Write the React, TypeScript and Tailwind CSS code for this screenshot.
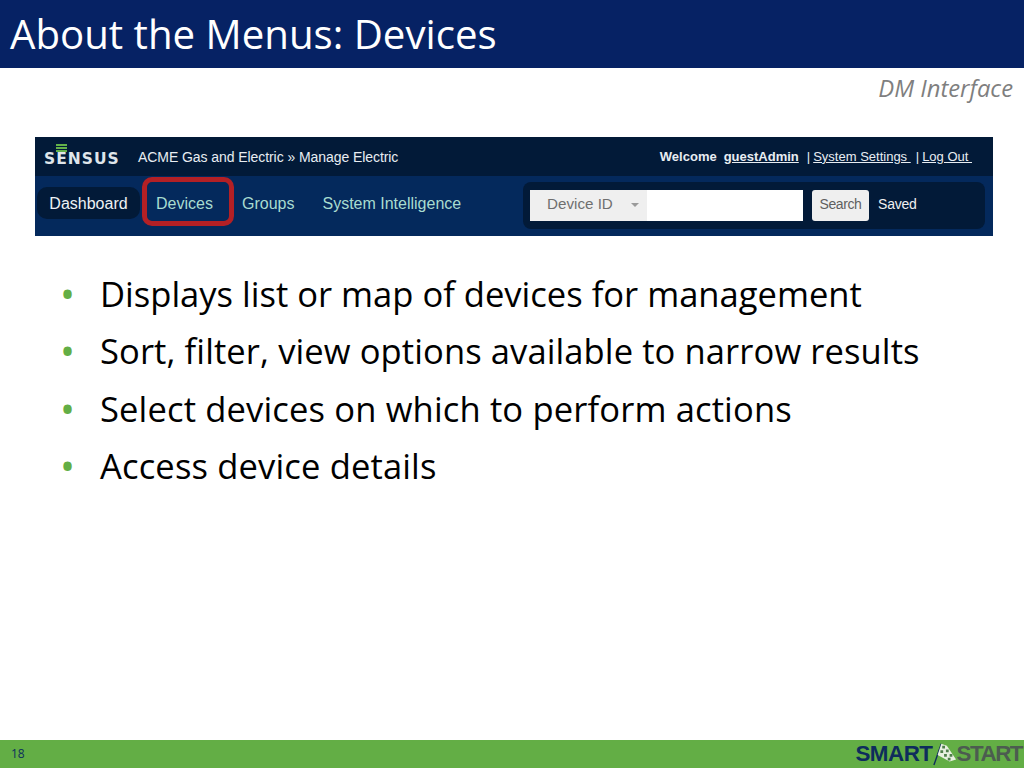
export default function App() {
  const bullets = [
    { text: "Displays list or map of devices for management", fit: "tracking-[0px]" },
    { text: "Sort, filter, view options available to narrow results", fit: "tracking-[0.09px]" },
    { text: "Select devices on which to perform actions", fit: "tracking-[0.14px]" },
    { text: "Access device details", fit: "tracking-[0.14px]" },
  ];
  return (
    <div className="w-[1024px] h-[768px] flex flex-col bg-white overflow-hidden font-['Open_Sans',sans-serif]">
      <header className="h-[68px] bg-[#062264] flex items-center pl-[10px] text-white text-[40.2px] leading-none">
        About the Menus: Devices
      </header>
      <main className="flex-1 flex flex-col">
        <div className="h-[69px] pt-[6px] pr-[11px] text-right italic text-[23.8px] leading-[28px] text-[#7f7f7f]">
          DM Interface
        </div>
        <section className="mx-[35px] w-[958px] h-[99px] flex flex-col font-['Liberation_Sans',sans-serif]">
          <div className="h-[39px] bg-[#021a38] flex items-center pl-[9px] pr-[21px] text-white">
            <div className="w-[74px] h-[26px] flex flex-col items-start">
              <div className="ml-[12px] w-[11px] flex flex-col gap-[1px]">
                <span className="h-[2px] bg-[#63b14a]" />
                <span className="h-[2px] bg-[#63b14a]" />
                <span className="h-[2px] bg-[#63b14a]" />
              </div>
              <span className="font-['DejaVu_Sans',sans-serif] font-bold text-[15.5px] leading-[15px] tracking-[1px] text-[#dfe5ea]">SENSUS</span>
            </div>
            <span className="ml-[20px] text-[14px] tracking-[-0.07px] text-[#e8edf2] relative top-[1px]">ACME Gas and Electric » Manage Electric</span>
            <div className="ml-auto flex items-center text-[13px] text-[#e8edf2]">
              <span className="font-bold">Welcome</span>
              <span className="ml-[7px] font-bold underline">guestAdmin</span>
              <span className="ml-[8px]">|</span>
              <span className="ml-[3px] underline whitespace-pre">System Settings </span>
              <span className="ml-[5px]">|</span>
              <span className="ml-[3px] underline whitespace-pre">Log Out </span>
            </div>
          </div>
          <div className="flex-1 bg-[#04295c] flex items-center pl-[2px] pr-[8px] pb-[6px] text-[16px]">
            <span className="w-[103px] h-[32px] pt-[2px] rounded-[10px] bg-[#021a38] text-[#eef2f5] flex items-center justify-center">Dashboard</span>
            <span className="ml-[2px] w-[92px] h-[49px] pt-[5px] rounded-[10px] border-[5px] border-[#b32025] text-[#a8dcd0] flex items-center pl-[9px] relative -top-[2px]">Devices</span>
            <span className="ml-[8px] text-[#a8dcd0] relative top-[1px]">Groups</span>
            <span className="ml-[28px] text-[#a8dcd0] relative top-[1px]">System Intelligence</span>
            <div className="ml-auto w-[462px] h-[47px] rounded-[8px] bg-[#021a38] flex items-center pl-[7px] mt-[4px]">
              <div className="w-[117px] h-[31px] pb-[1px] bg-[#efefef] text-[#6f6f6f] flex items-center pl-[17px] text-[15.2px]">
                Device ID
                <span className="ml-[18px] w-0 h-0 border-x-[4px] border-x-transparent border-t-[4px] border-t-[#9a9a9a]" />
              </div>
              <div className="w-[156px] h-[31px] bg-white" />
              <span className="ml-[9px] w-[57px] h-[31px] pb-[2px] rounded-[3px] bg-[#efefef] text-[#5f5f5f] text-[14px] tracking-[-0.4px] flex items-center justify-center">Search</span>
              <span className="ml-[9px] mb-[2px] text-[14px] tracking-[-0.2px] text-[#f0f0f0]">Saved</span>
            </div>
          </div>
        </section>
        <ul className="mt-[29px] pl-[60px] text-[34.55px] leading-[57.3px] text-black">
          {bullets.map((b) => (
            <li key={b.text} className="flex">
              <span className="w-[40px] text-[#63ae45] text-[40px] leading-[57px]">•</span>
              <span className={b.fit}>{b.text}</span>
            </li>
          ))}
        </ul>
      </main>
      <footer className="h-[28px] bg-[#63ae45] flex items-center pl-[11px]">
        <span className="text-[12px] text-[#0c2f5c]">18</span>
        <div className="ml-auto mr-[2px] flex items-center font-['Liberation_Sans',sans-serif] font-bold text-[22.4px] leading-none">
          <span className="text-[#0e2c5c] tracking-[-0.5px]">SMART</span>
          <svg width="24" height="24" viewBox="0 0 26 24" className="shrink-0">
            <path d="M1 24 L9 1" stroke="#0e2c5c" strokeWidth="1.5" />
            <path d="M9 1 L15 3 L25 18 L18 20 L5 13Z" fill="#e8f0e0" />
            <path d="M10 3h3v3h-3zM14 7h3v3h-3zM8 8h3v3h-3zM12 12h3v3h-3zM18 12h3v3h-3zM16 16h3v3h-3z" fill="#4f7f4a" />
          </svg>
          <span className="text-[#4c5c50] tracking-[-1.5px]">START</span>
        </div>
      </footer>
    </div>
  );
}
